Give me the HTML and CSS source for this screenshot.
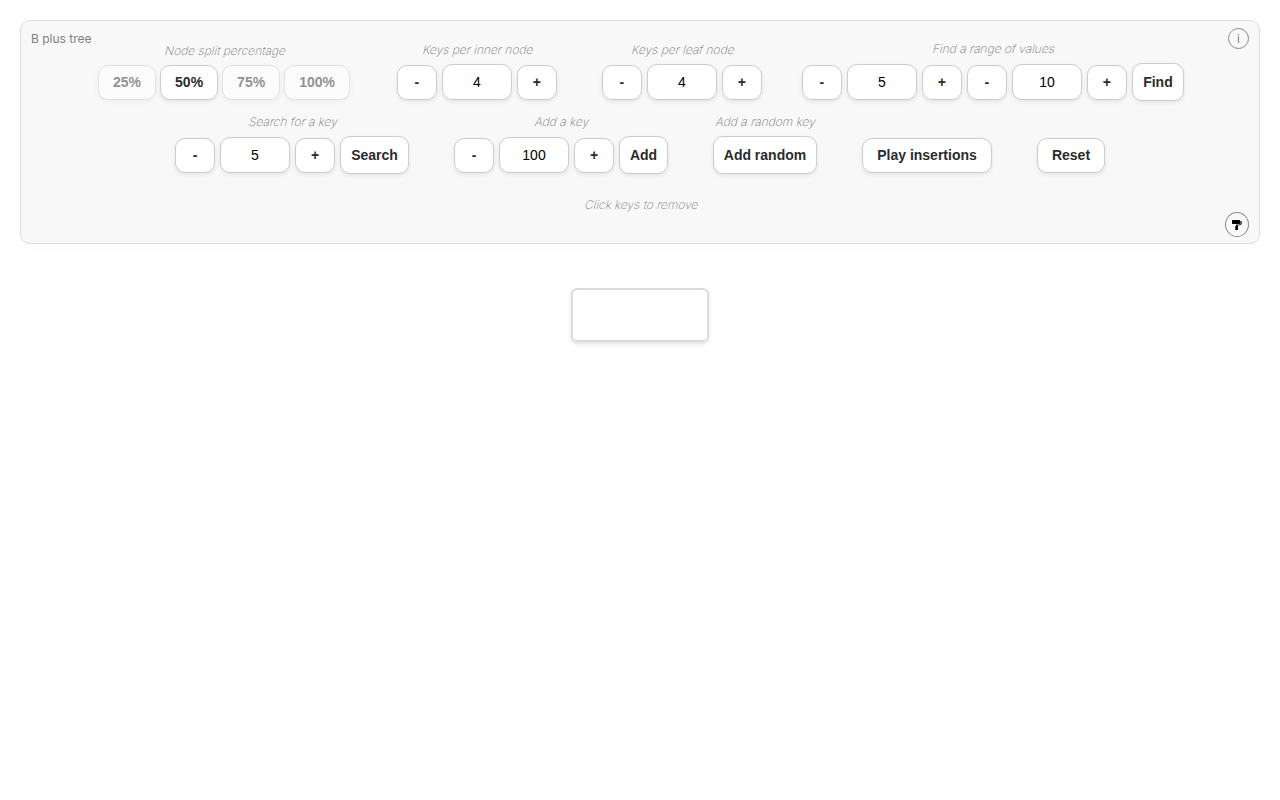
FILE: index.html
```
<!DOCTYPE html>
<html lang="en">
<head>
<meta charset="utf-8">
<title>B plus tree</title>
<link rel="stylesheet" href="styles.css">
</head>
<body>
<main class="panel">
  <span class="title">B plus tree</span>
  <button class="round info" aria-label="Information">i</button>
  <div class="row row-settings">
    <section class="group split">
      <span class="label">Node split percentage</span>
      <div class="controls options">
        <button class="btn off">25%</button><button class="btn">50%</button><button class="btn off">75%</button><button class="btn off">100%</button>
      </div>
    </section>
    <section class="group inner">
      <span class="label">Keys per inner node</span>
      <div class="controls"><button class="btn step">-</button><input class="field" value="4"><button class="btn step">+</button></div>
    </section>
    <section class="group leaf">
      <span class="label">Keys per leaf node</span>
      <div class="controls"><button class="btn step">-</button><input class="field" value="4"><button class="btn step">+</button></div>
    </section>
    <section class="group range">
      <span class="label">Find a range of values</span>
      <div class="controls"><button class="btn step">-</button><input class="field" value="5"><button class="btn step">+</button><button class="btn step">-</button><input class="field" value="10"><button class="btn step">+</button><button class="btn action find">Find</button></div>
    </section>
  </div>
  <div class="row row-actions">
    <section class="group">
      <span class="label">Search for a key</span>
      <div class="controls"><button class="btn step">-</button><input class="field" value="5"><button class="btn step">+</button><button class="btn action search">Search</button></div>
    </section>
    <section class="group">
      <span class="label">Add a key</span>
      <div class="controls"><button class="btn step">-</button><input class="field" value="100"><button class="btn step">+</button><button class="btn action add">Add</button></div>
    </section>
    <section class="group">
      <span class="label">Add a random key</span>
      <div class="controls"><button class="btn action random">Add random</button></div>
    </section>
    <div class="controls"><button class="btn play">Play insertions</button></div>
    <div class="controls"><button class="btn reset">Reset</button></div>
  </div>
  <div class="hint"><span class="label">Click keys to remove</span></div>
  <button class="round theme" aria-label="Theme">
    <svg width="12" height="12" viewBox="0 0 12 12"><path d="M9 2H10.2Q11 2 11 2.8V4.4Q11 6.1 9.2 6.3L6.6 6.7V5.4L9.1 5Z" fill="#555"/><path d="M1.6 1H8.4Q9 1 9 1.6V4.2Q9 4.9 8.4 4.9H1.6Q1 4.9 1 4.3V1.6Q1 1 1.6 1ZM5.5 5.5H6.6V7H7V10.4Q7 11 6.4 11H4.9Q4.3 11 4.3 10.4V7H5V6.1Z"/></svg>
  </button>
</main>
<div class="node"></div>
</body>
</html>
```
FILE: styles.css
```
* { box-sizing: border-box; }
body { margin: 0; padding: 20px; background: #fff; font-family: Inter, sans-serif; }
.panel {
  position: relative;
  height: 224px;
  padding-top: 21px;
  border: 1px solid #ddd;
  border-radius: 10px;
  background: #f8f8f8;
  box-shadow: 0 4px 10px rgba(0, 0, 0, .02);
}
.title { position: absolute; left: 10px; top: 10px; font-size: 12px; line-height: 16px; font-weight: 380; color: #808080; }
.row { display: flex; justify-content: center; align-items: flex-end; gap: 45px; }
.row-settings { height: 58px; padding-left: 2px; }
.row-actions { margin-top: 15px; height: 58px; }
.group { display: flex; flex-direction: column; align-items: center; }
.split { margin-right: 2px; }
.range { margin-left: -5px; }
.label { display: inline-block; font-size: 12px; line-height: 16px; font-weight: 180; color: #777; white-space: nowrap; transform: skewX(-14deg); transform-origin: 50% 12px; }
.group .label { margin-bottom: 6px; }
.controls { display: flex; align-items: flex-end; gap: 5px; }
.options { gap: 4px; }
.btn, .field {
  height: 35px;
  margin: 0;
  border: 1px solid #ccc;
  border-radius: 10px;
  background: #fff;
  box-shadow: 0 2px 4px rgba(0, 0, 0, .08);
  font: 700 14px/17px "Liberation Sans", Arial, sans-serif;
  color: #2b2b2b;
  text-align: center;
}
.btn { padding: 0 14px; }
.off { opacity: .5; }
.step { width: 40px; padding: 0; }
.field { width: 70px; height: 36px; padding: 0; font-weight: 400; color: #000; }
.action { height: 38px; margin-bottom: -1px; padding: 0; }
.find { width: 52px; }
.search { width: 69px; }
.add { width: 49px; }
.random { width: 104px; }
.play { width: 130px; padding: 0; }
.reset { width: 68px; padding: 0; }
.hint { display: flex; justify-content: center; margin-top: 24px; padding-left: 2px; }
.hint .label { font-weight: 220; color: #808080; }
.round {
  position: absolute;
  display: flex;
  align-items: center;
  justify-content: center;
  padding: 0;
  border: 1px solid #888;
  border-radius: 50%;
  background: transparent;
}
.info { top: 7px; right: 10px; width: 21px; height: 21px; font: 300 12px/16px Inter, sans-serif; color: #666; }
.theme { right: 10px; bottom: 6px; width: 24px; height: 25px; }
.node { width: 138px; height: 54px; margin: 44px auto 0; border: 2px solid #dcdcdc; border-radius: 6px; box-shadow: 0 2px 4px rgba(0, 0, 0, .12); }
```
